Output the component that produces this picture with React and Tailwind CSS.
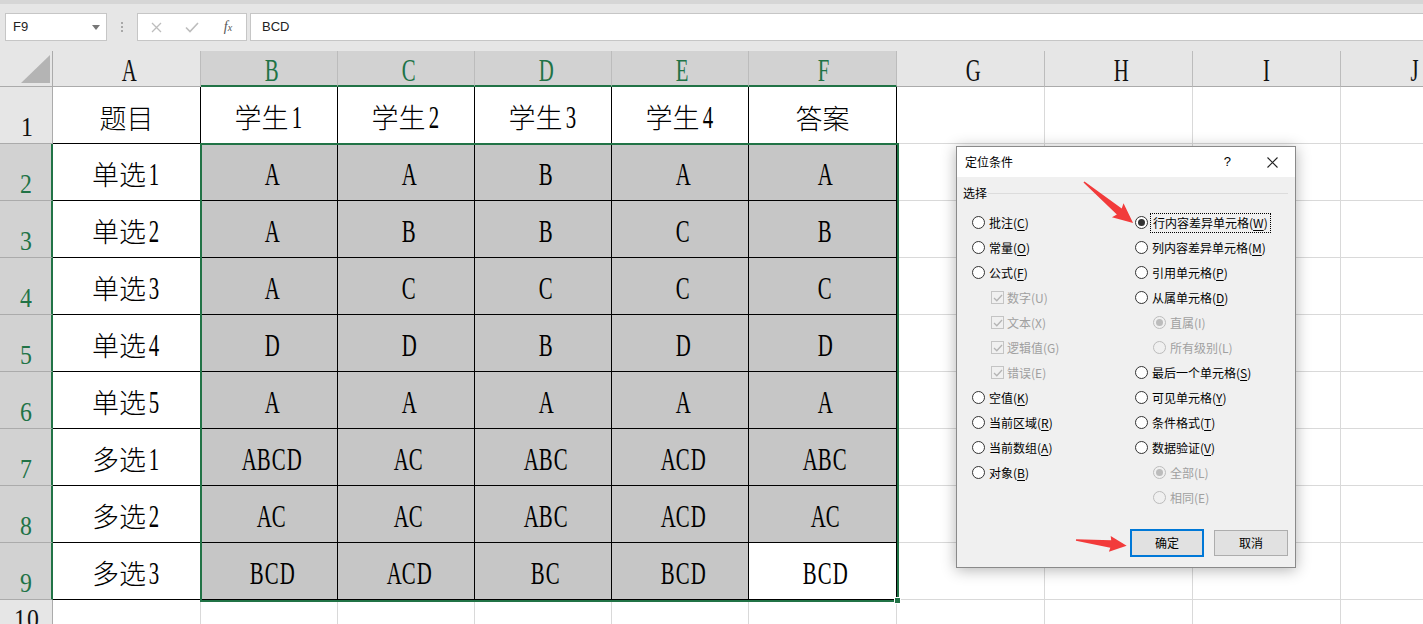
import React from "react";

const CJK = "font-['Noto_Sans_CJK_SC',sans-serif]";
const SERIF = "font-['Liberation_Serif',serif]";
const GREEN = "text-[#217346]";

// SimSun-like text: CJK full width, latin chars squeezed into half-width boxes
function Txt({ s, big = true }) {
  return (
    <span className="whitespace-nowrap leading-none">
      {[...s].map((c, i) =>
        c.charCodeAt(0) < 128 ? (
          <span
            key={i}
            className={
              big
                ? `inline-block text-center w-[15px] scale-x-[0.65] text-[32px] ${SERIF}`
                : `inline-block text-center w-[13px] scale-x-[0.85] text-[28px] ${SERIF}`
            }
          >
            {c}
          </span>
        ) : (
          <span key={i} className={`text-[27px] font-light ${CJK}`}>
            {c}
          </span>
        )
      )}
    </span>
  );
}

const COLS = ["A", "B", "C", "D", "E", "F", "G", "H", "I", "J"];

const DATA = [
  ["题目", "学生1", "学生2", "学生3", "学生4", "答案"],
  ["单选1", "A", "A", "B", "A", "A"],
  ["单选2", "A", "B", "B", "C", "B"],
  ["单选3", "A", "C", "C", "C", "C"],
  ["单选4", "D", "D", "B", "D", "D"],
  ["单选5", "A", "A", "A", "A", "A"],
  ["多选1", "ABCD", "AC", "ABC", "ACD", "ABC"],
  ["多选2", "AC", "AC", "ABC", "ACD", "AC"],
  ["多选3", "BCD", "ACD", "BC", "BCD", "BCD"],
];

function Toolbar() {
  return (
    <div className="h-[51px] bg-[#e6e6e6] border-t-[4px] border-[#d6d6d6] flex items-start pt-[9px] font-['Liberation_Sans',sans-serif] text-[13px] text-[#222]">
      <div className="ml-[5px] w-[102px] h-[28px] bg-white border border-[#c6c6c6] flex items-center pl-[7px]">
        <span>F9</span>
        <svg className="ml-auto mr-[6px]" width="8" height="5" viewBox="0 0 8 5">
          <path d="M0 0 L8 0 L4 5 Z" fill="#777" />
        </svg>
      </div>
      <div className="w-[30px] h-[28px] flex flex-col items-center justify-center gap-[2px]">
        <span className="w-[2px] h-[2px] bg-[#a8a8a8]" />
        <span className="w-[2px] h-[2px] bg-[#a8a8a8]" />
        <span className="w-[2px] h-[2px] bg-[#a8a8a8]" />
      </div>
      <div className="w-[110px] h-[28px] bg-white border border-[#c6c6c6] flex items-center">
        <div className="w-[36px] flex justify-center">
          <svg width="11" height="11" viewBox="0 0 11 11">
            <path d="M1 1 L10 10 M10 1 L1 10" stroke="#bdbdbd" strokeWidth="1.3" />
          </svg>
        </div>
        <div className="w-[36px] flex justify-center">
          <svg width="14" height="11" viewBox="0 0 14 11">
            <path d="M1 5.5 L5 9.5 L13 1" stroke="#bdbdbd" strokeWidth="1.6" fill="none" />
          </svg>
        </div>
        <div className="w-[36px] flex justify-center">
          <span className="italic font-['Liberation_Serif',serif] text-[14px] text-[#555] leading-none">
            f<span className="text-[10px]">x</span>
          </span>
        </div>
      </div>
      <div className="ml-[3px] flex-1 h-[28px] bg-white border border-[#c6c6c6] -mr-px flex items-center pl-[11px]">
        BCD
      </div>
    </div>
  );
}

function Sheet() {
  const cells = [];
  // header row
  cells.push(
    <div key="corner" className="bg-[#e6e6e6] border-r border-b border-[#ababab] relative">
      <svg className="absolute left-[21px] top-[4px]" width="29" height="28" viewBox="0 0 29 28">
        <path d="M29 0 L29 28 L0 28 Z" fill="#b4b4b4" />
      </svg>
    </div>
  );
  COLS.forEach((c, i) => {
    const sel = i >= 1 && i <= 5;
    cells.push(
      <div
        key={"h" + c}
        className={
          sel
            ? `bg-[#d2d2d2] border-r border-[#bcbcbc] border-b-2 border-b-[#217346] flex items-center justify-center pt-[3px] ${GREEN}`
            : "bg-[#e6e6e6] border-r border-[#bcbcbc] border-b border-b-[#ababab] flex items-center justify-center pt-[3px] text-[#111]"
        }
      >
        <Txt s={c} />
      </div>
    );
  });

  for (let r = 1; r <= 10; r++) {
    const selRow = r >= 2 && r <= 9;
    cells.push(
      <div
        key={"r" + r}
        className={
          selRow
            ? `bg-[#d2d2d2] border-b border-[#ababab] border-r-2 border-r-[#217346] flex items-end justify-center pb-[2px] ${GREEN}`
            : "bg-[#e6e6e6] border-b border-[#ababab] border-r border-r-[#ababab] flex items-end justify-center pb-[2px] text-[#111]"
        }
      >
        <Txt s={String(r)} big={false} />
      </div>
    );
    COLS.forEach((c, ci) => {
      const inTable = r <= 9 && ci <= 5;
      const gray = r >= 2 && r <= 9 && ci >= 1 && ci <= 5 && !(r === 9 && ci === 5);
      const text = inTable ? DATA[r - 1][ci] : "";
      let cls;
      if (inTable) {
        cls = gray
          ? "bg-[#c6c6c6] border-r border-b border-black flex items-center justify-center pt-[4px] text-black"
          : "bg-white border-r border-b border-black flex items-center justify-center pt-[4px] text-black";
      } else {
        cls = "bg-white border-r border-b border-[#d9d9d9]";
      }
      cells.push(
        <div key={c + r} className={cls}>
          {text && <Txt s={text} />}
        </div>
      );
    });
  }

  return (
    <div className="relative">
      <div className="grid grid-cols-[53px_148px_137px_137px_137px_137px_148px_148px_148px_148px_148px] grid-rows-[36px_57px_57px_57px_57px_57px_57px_57px_57px_57px_36px]">
        {cells}
      </div>
      {/* selection B2:F9 */}
      <div className="absolute left-[200px] top-[92px] w-[699px] h-[459px] border-2 border-[#217346] pointer-events-none" />
      <div className="absolute left-[894px] top-[546px] w-[7px] h-[7px] bg-[#217346] border border-white" />
    </div>
  );
}

function Radio({ checked, disabled }) {
  return (
    <span
      className={
        disabled
          ? "w-[13px] h-[13px] rounded-full border border-[#bcbcbc] bg-[#f0f0f0] flex items-center justify-center shrink-0"
          : "w-[13px] h-[13px] rounded-full border border-[#333] bg-white flex items-center justify-center shrink-0"
      }
    >
      {checked && (
        <span className={disabled ? "w-[7px] h-[7px] rounded-full bg-[#bcbcbc]" : "w-[7px] h-[7px] rounded-full bg-[#333]"} />
      )}
    </span>
  );
}

function Check() {
  return (
    <span className="w-[13px] h-[13px] border border-[#c4c4c4] bg-[#f0f0f0] flex items-center justify-center shrink-0">
      <svg width="10" height="8" viewBox="0 0 10 8">
        <path d="M1 4 L3.8 6.8 L9 1" stroke="#b4b4b4" strokeWidth="1.3" fill="none" />
      </svg>
    </span>
  );
}

function Label({ t, k, disabled }) {
  if (disabled) return <span className="text-[#a0a0a0]">{t}({k})</span>;
  return (
    <span>
      {t}(<span className="underline underline-offset-2">{k}</span>)
    </span>
  );
}

const LEFT = [
  { t: "批注", k: "C" },
  { t: "常量", k: "O" },
  { t: "公式", k: "F" },
  { t: "数字", k: "U", cb: true },
  { t: "文本", k: "X", cb: true },
  { t: "逻辑值", k: "G", cb: true },
  { t: "错误", k: "E", cb: true },
  { t: "空值", k: "K" },
  { t: "当前区域", k: "R" },
  { t: "当前数组", k: "A" },
  { t: "对象", k: "B" },
];

const RIGHT = [
  { t: "行内容差异单元格", k: "W", on: true, focus: true },
  { t: "列内容差异单元格", k: "M" },
  { t: "引用单元格", k: "P" },
  { t: "从属单元格", k: "D" },
  { t: "直属", k: "I", sub: true, on: true },
  { t: "所有级别", k: "L", sub: true },
  { t: "最后一个单元格", k: "S" },
  { t: "可见单元格", k: "Y" },
  { t: "条件格式", k: "T" },
  { t: "数据验证", k: "V" },
  { t: "全部", k: "L", sub: true, on: true },
  { t: "相同", k: "E", sub: true },
];

function Dialog() {
  return (
    <div className={`absolute left-[956px] top-[146px] w-[340px] h-[422px] bg-[#f0f0f0] border border-[#8a8a8a] shadow-[0_2px_14px_rgba(0,0,0,0.3)] flex flex-col text-[12px] text-black ${CJK}`}>
      <div className="h-[30px] shrink-0 bg-white flex items-center pl-[8px]">
        <span>定位条件</span>
        <span className="ml-auto text-[13px] font-['Liberation_Sans',sans-serif]">?</span>
        <svg className="ml-[36px] mr-[17px]" width="11" height="11" viewBox="0 0 11 11">
          <path d="M0.5 0.5 L10.5 10.5 M10.5 0.5 L0.5 10.5" stroke="#222" strokeWidth="1.1" />
        </svg>
      </div>
      <div className="flex-1 flex flex-col">
        <div className="flex items-center pl-[6px] pr-[7px] pt-[8px] h-[24px]">
          <span>选择</span>
          <span className="flex-1 h-px bg-[#dcdcdc] ml-[1px]" />
        </div>
        <div className="flex pl-[15px] mt-[9px]">
          <div className="w-[163px] flex flex-col">
            {LEFT.map((o, i) => (
              <div key={i} className="h-[25px] flex items-center">
                {o.cb ? (
                  <>
                    <span className="ml-[19px]"><Check /></span>
                    <span className="ml-[3px]"><Label t={o.t} k={o.k} disabled /></span>
                  </>
                ) : (
                  <>
                    <Radio />
                    <span className="ml-[4px]"><Label t={o.t} k={o.k} /></span>
                  </>
                )}
              </div>
            ))}
          </div>
          <div className="flex-1 flex flex-col">
            {RIGHT.map((o, i) => (
              <div key={i} className="h-[25px] flex items-center">
                {o.sub ? (
                  <>
                    <span className="ml-[18px]"><Radio checked={o.on} disabled /></span>
                    <span className="ml-[4px]"><Label t={o.t} k={o.k} disabled /></span>
                  </>
                ) : (
                  <>
                    <Radio checked={o.on} />
                    {o.focus ? (
                      <span className="ml-[2px] px-[2px] py-[2px] border border-dotted border-black leading-[14px]">
                        <Label t={o.t} k={o.k} />
                      </span>
                    ) : (
                      <span className="ml-[4px]"><Label t={o.t} k={o.k} /></span>
                    )}
                  </>
                )}
              </div>
            ))}
          </div>
        </div>
        <div className="mt-auto flex justify-end items-end gap-[10px] pr-[7px] pb-[10px]">
          <button className="w-[74px] h-[28px] bg-[#e1e1e1] border-2 border-[#0078d7] text-[12px]">确定</button>
          <button className="w-[74px] h-[26px] mb-px bg-[#e1e1e1] border border-[#adadad] text-[12px]">取消</button>
        </div>
      </div>
    </div>
  );
}

function Arrows() {
  return (
    <svg className="absolute inset-0 pointer-events-none" width="1423" height="624" viewBox="0 0 1423 624">
      <polygon
        transform="translate(1084 182) rotate(39.9)"
        points="0,-0.8 46,-3.8 44,-9 64,0 44,9 46,3.8 0,0.8"
        fill="#f23b3b"
      />
      <polygon
        transform="translate(1076 540) rotate(6.5)"
        points="0,-0.8 35,-3.8 34,-8 51,0 34,8 35,3.8 0,0.8"
        fill="#f23b3b"
      />
    </svg>
  );
}

export default function App() {
  return (
    <div className="relative w-[1423px] h-[624px] overflow-hidden bg-white">
      <Toolbar />
      <Sheet />
      <Dialog />
      <Arrows />
    </div>
  );
}
